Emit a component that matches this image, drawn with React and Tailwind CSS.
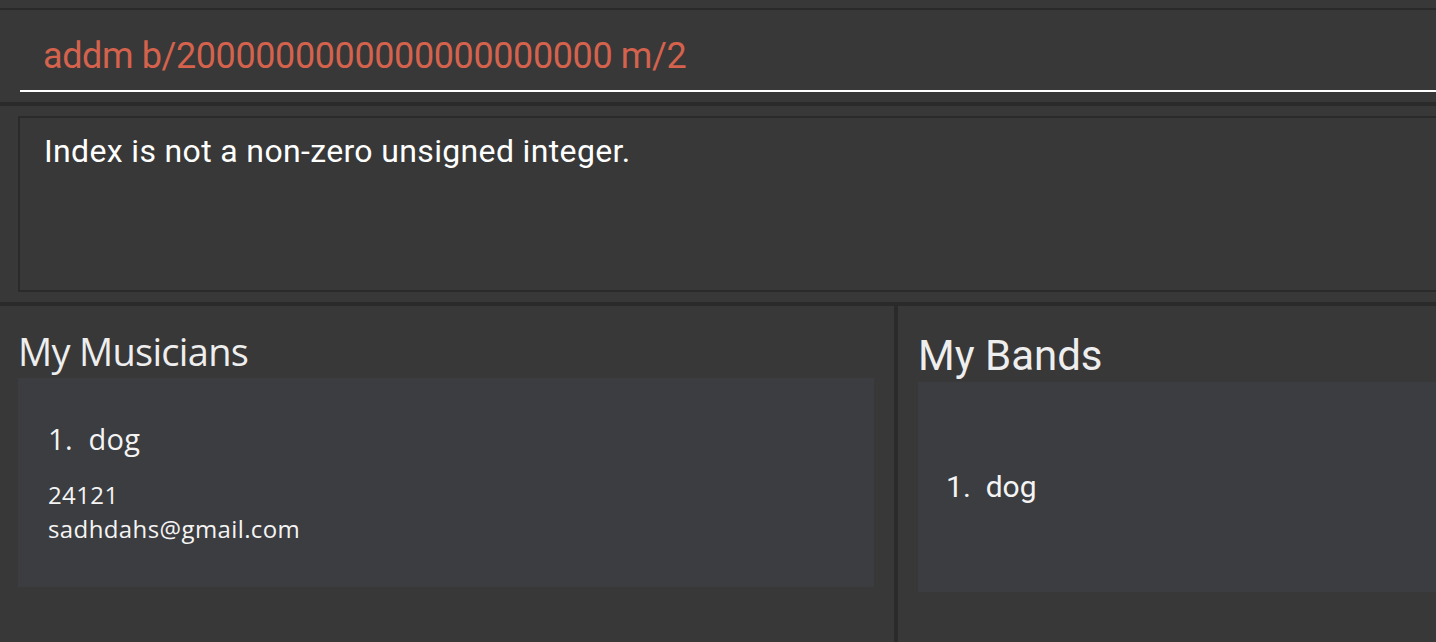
const ROBOTO = { fontFamily: 'Roboto, "Liberation Sans", sans-serif' };
const OPEN = { fontFamily: '"Open Sans", "Noto Sans", sans-serif' };

const MUSICIANS = [{ name: 'dog', phone: '24121', email: 'sadhdahs@gmail.com' }];
const BANDS = [{ name: 'dog' }];

function Divider({ className = 'h-1' }) {
  return <div className={`${className} shrink-0 bg-[#2a2a2a]`} />;
}

function MusicianCard({ m, i }) {
  return (
    <div className="pl-[30px] pt-[46px] text-[#f4f4f4]" style={OPEN}>
      <div className="text-[29px] leading-[29px] tracking-[0.3px]">
        {i + 1}.&nbsp; {m.name}
      </div>
      <div className="mt-[25px] text-[24px] leading-[34px] tracking-[0.4px]">{m.phone}</div>
      <div className="text-[24px] leading-[34px] tracking-[0.4px]">{m.email}</div>
    </div>
  );
}

export default function App() {
  return (
    <div className="w-[1436px] h-[642px] overflow-hidden bg-[#383838] flex flex-col">
      <div className="h-2 shrink-0" />
      <Divider className="h-[2px]" />

      {/* command box */}
      <div className="h-[80px] shrink-0 pl-[43px] pt-[28px]">
        <div
          className="text-[36px] leading-[36px] tracking-[-0.4px] text-[#d5624d] whitespace-nowrap"
          style={ROBOTO}
        >
          addm b/2000000000000000000000 m/2
        </div>
      </div>
      <div className="ml-5 h-[2px] shrink-0 bg-white" />
      <div className="h-[10px] shrink-0" />
      <Divider />
      <div className="h-[10px] shrink-0" />

      {/* result display */}
      <div className="ml-[18px] h-[176px] shrink-0 border-2 border-r-0 border-[#2a2a2a] pl-[24px] pt-[17px]">
        <div className="text-[32px] leading-[32px] tracking-[0.35px] text-white" style={ROBOTO}>
          Index is not a non-zero unsigned integer.
        </div>
      </div>
      <div className="h-[10px] shrink-0" />
      <Divider />

      {/* lists */}
      <div className="flex flex-1 min-h-0">
        <div className="w-[894px] shrink-0 pl-[18px] pr-5 pt-[26px]">
          <h2
            className="text-[38px] leading-[38px] tracking-[-0.7px] text-[#eeeeee]"
            style={OPEN}
          >
            My Musicians
          </h2>
          <div className="mt-2 h-[209px] bg-[#3c3d40]">
            {MUSICIANS.map((m, i) => (
              <MusicianCard key={i} m={m} i={i} />
            ))}
          </div>
        </div>
        <Divider className="w-1" />
        <div className="flex-1 pl-5 pt-[29px]">
          <h2 className="text-[42px] leading-[42px] text-[#eeeeee]" style={ROBOTO}>
            My Bands
          </h2>
          <div className="mt-[5px] h-[210px] bg-[#3c3d40] flex flex-col justify-center pl-7">
            {BANDS.map((b, i) => (
              <div key={i} className="text-[30px] leading-[30px] text-[#f4f4f4]" style={ROBOTO}>
                {i + 1}.&nbsp; {b.name}
              </div>
            ))}
          </div>
        </div>
      </div>
    </div>
  );
}
